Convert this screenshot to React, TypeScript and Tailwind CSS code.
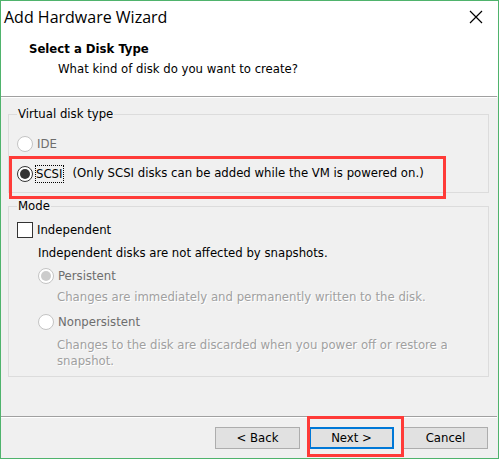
import type { ReactNode } from 'react';

const radioBase =
  'm-0 grid size-4 shrink-0 appearance-none place-content-center rounded-full border bg-white before:size-[10px] before:rounded-full';

function Divider() {
  return <div className="mr-px h-[2px] shrink-0 border-t border-[#a0a0a0] bg-white" />;
}

function Group({ title, children }: { title: string; children: ReactNode }) {
  return (
    <fieldset className="min-w-0 border border-[#dcdcdc] px-2">
      <legend className="px-px leading-4">{title}</legend>
      {children}
    </fieldset>
  );
}

function Hint({ children }: { children: ReactNode }) {
  return <p className="pl-[19px] leading-4 text-[#a0a0a0] [text-shadow:1px_1px_0_#ffffff]">{children}</p>;
}

export default function App() {
  return (
    <main className="flex min-h-screen flex-col border border-[#4fb36c] bg-[#f0f0f0] font-['DejaVu_Sans_Condensed','DejaVu_Sans',sans-serif] text-[13px] text-black">
      <header className="bg-white pb-[19px]">
        <div className="flex items-center justify-between pt-1 pr-[14px] pl-[3px]">
          <h1 className="font-['Open_Sans','Noto_Sans',sans-serif] text-[16px] leading-6">Add Hardware Wizard</h1>
          <button type="button" aria-label="Close" className="grid size-4 place-content-center">
            <svg width="14" height="14" viewBox="0 0 14 14" fill="none" stroke="#000" strokeWidth="1.2">
              <path d="M1 1l12 12M13 1L1 13" />
            </svg>
          </button>
        </div>
        <h2 className="mt-3 pl-7 leading-4 font-bold">Select a Disk Type</h2>
        <p className="mt-1 pl-[57px] leading-4">What kind of disk do you want to create?</p>
      </header>
      <Divider />

      <form className="flex flex-1 flex-col">
        <div className="flex flex-1 flex-col gap-[5px] pt-2 pr-[9px] pb-[39px] pl-[7px]">
          <Group title="Virtual disk type">
            <label className="mt-[13px] flex h-[18px] items-center gap-1 text-[#6d6d6d]">
              <input type="radio" name="disk" disabled className={`${radioBase} border-[#c4c4c4]`} />
              IDE
            </label>
            <div className="relative mt-3 mb-[9px] flex h-[18px] items-start">
              <label className="flex items-center gap-[2px]">
                <input
                  type="radio"
                  name="disk"
                  defaultChecked
                  className={`${radioBase} border-[#333333] checked:before:bg-[#333333]`}
                />
                <span className="border border-dotted border-black pr-px leading-4">SCSI</span>
              </label>
              <span className="ml-2 leading-4">(Only SCSI disks can be added while the VM is powered on.)</span>
              <span className="pointer-events-none absolute -top-[9px] -left-2 h-[43px] w-[437px] border-3 border-[#ff3b38]" />
            </div>
          </Group>

          <Group title="Mode">
            <label className="mt-2 flex h-4 items-center gap-1">
              <input type="checkbox" className="m-0 size-4 shrink-0 appearance-none border border-[#333333] bg-white checked:bg-[#333333]" />
              Independent
            </label>
            <div className="mb-[7px] pl-[21px]">
              <p className="mt-[7px] leading-4">Independent disks are not affected by snapshots.</p>
              <label className="mt-[7px] flex h-4 items-center gap-1 text-[#6d6d6d]">
                <input
                  type="radio"
                  name="mode"
                  disabled
                  defaultChecked
                  className={`${radioBase} border-[#c4c4c4] checked:before:bg-[#cccccc]`}
                />
                Persistent
              </label>
              <div className="mt-[5px]">
                <Hint>Changes are immediately and permanently written to the disk.</Hint>
              </div>
              <label className="mt-[9px] flex h-4 items-center gap-1 text-[#6d6d6d]">
                <input type="radio" name="mode" disabled className={`${radioBase} border-[#c4c4c4]`} />
                Nonpersistent
              </label>
              <div className="mt-[7px]">
                <Hint>Changes to the disk are discarded when you power off or restore a snapshot.</Hint>
              </div>
            </div>
          </Group>
        </div>

        <Divider />
        <div className="flex justify-end gap-[9px] pt-[9px] pr-[10px] pb-[9px]">
          <button type="button" className="h-[22px] w-[85px] border border-[#adadad] bg-[#e1e1e1] leading-4">
            &lt; Back
          </button>
          <div className="relative">
            <button type="button" className="h-[22px] w-[85px] border-2 border-[#0078d7] bg-[#e1e1e1] leading-4">
              Next &gt;
            </button>
            <span className="pointer-events-none absolute -top-[11px] -left-[2px] z-10 h-[41px] w-[97px] border-3 border-[#ff3b38]" />
          </div>
          <button type="button" className="h-[22px] w-[85px] border border-[#adadad] bg-[#e1e1e1] leading-4">
            Cancel
          </button>
        </div>
      </form>
    </main>
  );
}
